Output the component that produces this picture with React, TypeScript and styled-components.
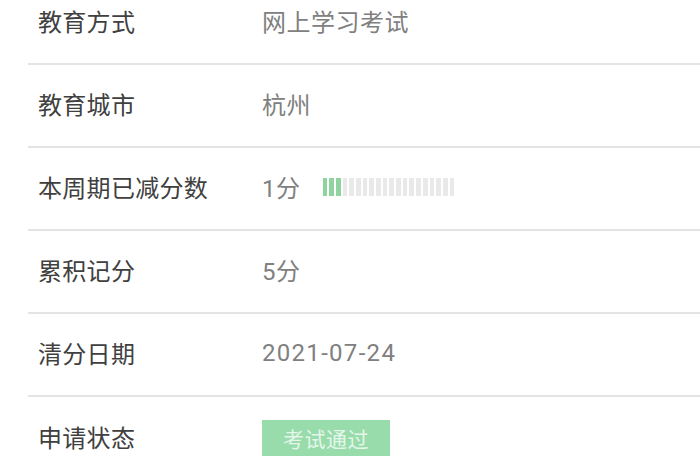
import React from "react";
import styled, { createGlobalStyle } from "styled-components";

const Global = createGlobalStyle`
  html, body { margin: 0; padding: 0; background: #ffffff; overflow: hidden; }
  body { font-family: "Noto Sans CJK SC", "Noto Sans", sans-serif; }
`;

const List = styled.div`
  width: 700px;
  height: 470px;
  overflow: hidden;
`;

const Inner = styled.div`
  margin-top: -18px;
  padding-left: 28px;
`;

const Row = styled.div<{ $last?: boolean }>`
  display: flex;
  align-items: center;
  box-sizing: border-box;
  height: 83px;
  padding-left: 10px;
  padding-bottom: 4px;
  border-bottom: ${(p) => (p.$last ? "none" : "2px solid #e4e4e4")};
`;

const Label = styled.div`
  width: 224px;
  font-size: 24px;
  color: #404040;
  letter-spacing: 0.3px;
`;

const Value = styled.div<{ $wide?: boolean }>`
  display: flex;
  align-items: center;
  font-family: "Roboto", "Noto Sans CJK SC", sans-serif;
  font-size: 24px;
  color: #808080;
  letter-spacing: ${(p) => (p.$wide ? "1.3px" : "0.5px")};
`;

const Bar = styled.div`
  display: flex;
  gap: 2px;
  margin-left: 22px;
  height: 18px;
`;

const Seg = styled.div<{ $on?: boolean }>`
  width: 4.7px;
  height: 100%;
  background: ${(p) => (p.$on ? "#8fd3a1" : "#e9e9e9")};
`;

const Badge = styled.div`
  width: 128px;
  height: 36px;
  margin-top: 2px;
  display: flex;
  align-items: center;
  justify-content: center;
  background: #97dcaa;
  color: #e4f6ea;
  font-size: 21px;
  letter-spacing: 0.5px;
`;

export default function App() {
  const segs = Array.from({ length: 20 }, (_, i) => i < 3);
  return (
    <>
      <Global />
      <List>
        <Inner>
          <Row>
            <Label>教育方式</Label>
            <Value>网上学习考试</Value>
          </Row>
          <Row>
            <Label>教育城市</Label>
            <Value>杭州</Value>
          </Row>
          <Row>
            <Label>本周期已减分数</Label>
            <Value>
              1分
              <Bar>
                {segs.map((on, i) => (
                  <Seg key={i} $on={on} />
                ))}
              </Bar>
            </Value>
          </Row>
          <Row>
            <Label>累积记分</Label>
            <Value>5分</Value>
          </Row>
          <Row>
            <Label>清分日期</Label>
            <Value $wide>2021-07-24</Value>
          </Row>
          <Row $last>
            <Label>申请状态</Label>
            <Badge>考试通过</Badge>
          </Row>
        </Inner>
      </List>
    </>
  );
}
